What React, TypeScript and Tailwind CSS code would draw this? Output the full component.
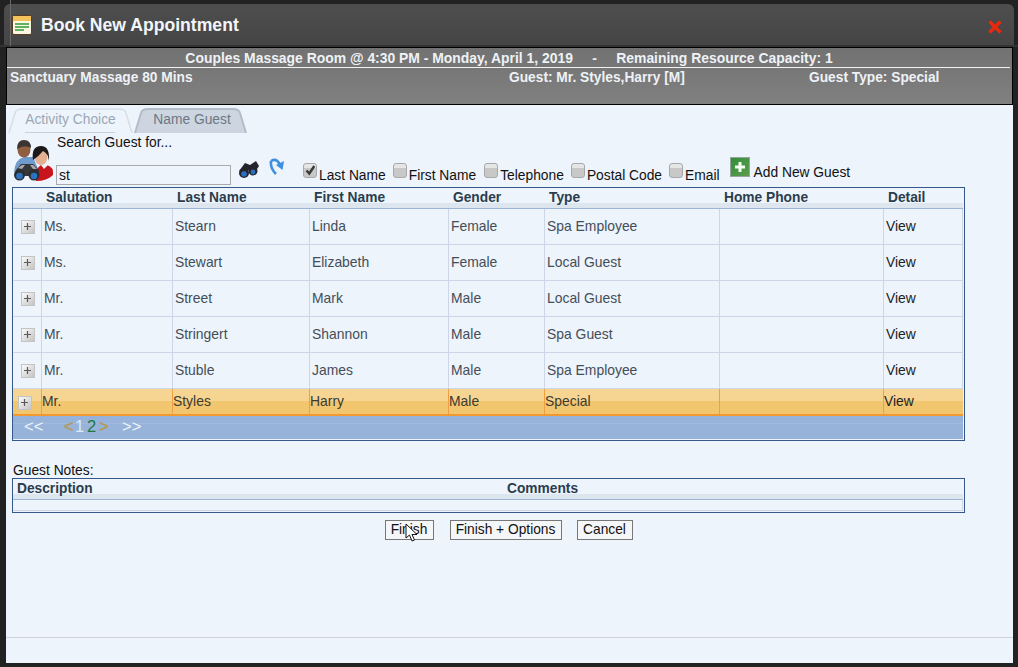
import React from "react";

const rows = [
  ["Ms.", "Stearn", "Linda", "Female", "Spa Employee"],
  ["Ms.", "Stewart", "Elizabeth", "Female", "Local Guest"],
  ["Mr.", "Street", "Mark", "Male", "Local Guest"],
  ["Mr.", "Stringert", "Shannon", "Male", "Spa Guest"],
  ["Mr.", "Stuble", "James", "Male", "Spa Employee"],
];
const headW = [28, 131, 137, 139, 96, 175, 164, 80];
const heads = ["", "Salutation", "Last Name", "First Name", "Gender", "Type", "Home Phone", "Detail"];

function Plus() {
  return (
    <span className="flex h-[14px] w-[14px] items-center justify-center border border-[#c4c4c4] bg-gradient-to-br from-[#fbfbfb] to-[#c4c4c4]">
      <svg width="7" height="7" viewBox="0 0 7 7"><path d="M3.5 0v7M0 3.5h7" stroke="#5a5a5a" strokeWidth="1.2" /></svg>
    </span>
  );
}

function Check({ on, label }: { on?: boolean; label: string }) {
  return (
    <span className="flex items-end">
      <span className="mb-[6px] flex h-[15px] w-[14px] items-center justify-center rounded-[3px] border border-[#a8a8a8] bg-[linear-gradient(#e6e6e6_0,#e6e6e6_30%,#c8c8c8_30%,#c8c8c8_100%)]">
        {on && <svg width="11" height="11" viewBox="0 0 11 11"><path d="M1.5 5.5l2.8 3 5-7.5" fill="none" stroke="#3a3a3a" strokeWidth="2.4" /></svg>}
      </span>
      <span className="ml-[2px] text-[13.8px] leading-[16px] text-[#111]">{label}</span>
    </span>
  );
}

function Tab({ w, label, active }: { w: number; label: string; active?: boolean }) {
  return (
    <div className="relative flex h-[25px] items-center justify-center" style={{ width: w }}>
      <svg className="absolute inset-0" width={w} height="25" viewBox={`0 0 ${w} 25`}>
        <path
          d={`M1 25 L7 5 Q8 1 14 1 L${w - 14} 1 Q${w - 8} 1 ${w - 7} 5 L${w - 1} 25`}
          fill={active ? "#edf4fc" : "#cdd5e0"}
          stroke={active ? "#d8dee6" : "#b4bcc8"}
          strokeWidth={active ? 1.5 : 2}
        />
      </svg>
      <span className={`relative text-[13.8px] ${active ? "text-[#9aa7b5]" : "text-[#6b7785] ml-[3px]"}`}>{label}</span>
      {active && <span className="absolute bottom-0 left-[17px] h-[1px] w-[90px] bg-[#c9d0d8]" />}
    </div>
  );
}

function GuestIcon() {
  return (
    <svg width="42" height="44" viewBox="0 0 42 44">
      <path d="M1 33 Q2 20 11 18 L20 18 L26 32 Z" fill="#6f9ccf" />
      <ellipse cx="11" cy="10.5" rx="6.5" ry="8" fill="#8f5f40" />
      <path d="M4 10 Q4 1 11 1 Q18 1 18 9 Q12 5 4 10Z" fill="#3a3533" />
      <path d="M23 42 Q22 29 28 26 L34 26 Q41 28 40 36 Q34 42 23 42Z" fill="#c9141d" />
      <path d="M28 26 L31 30 L35 26 Z" fill="#f3f3f3" />
      <ellipse cx="28" cy="18" rx="6.5" ry="8" fill="#e3b091" />
      <path d="M20 21 Q18 7 28 7 Q37 7 36 22 Q35 14 30 12 Q26 17 20 21Z" fill="#1b1919" />
      <path d="M3 31 L8 25 L20 25 L26 31 L26 37 L3 37 Z" fill="#34363a" />
      <path d="M5 29 L9 26 L12 26 L9 30Z" fill="#a8acb0" />
      <path d="M17 26 L20 26 L24 30 L20 30Z" fill="#a8acb0" />
      <circle cx="6.5" cy="36" r="5.5" fill="#2b2d30" />
      <circle cx="6.5" cy="37" r="3.3" fill="#2c73c4" />
      <circle cx="21" cy="36" r="5.5" fill="#2b2d30" />
      <circle cx="21" cy="37" r="3.3" fill="#2c73c4" />
    </svg>
  );
}

export default function App() {
  const font = { fontFamily: '"Liberation Sans", Arial, sans-serif' };
  return (
    <div className="relative flex h-[667px] w-[1018px] flex-col overflow-hidden bg-[#222222]" style={font}>
      {/* title */}
      <div className="mx-[4px] mt-[4px] flex h-[41px] shrink-0 items-center rounded-t-[6px] bg-gradient-to-b from-[#4e4e4e] to-[#454545] pl-[8px] pr-[12px]">
        <svg width="20" height="20" viewBox="0 0 20 20">
          <rect x="0.5" y="0.5" width="19" height="19" rx="1.5" fill="#fbf6e4" stroke="#5a3d20" />
          <rect x="1" y="1" width="18" height="5" fill="#f3c25a" />
          <path d="M3 9h14M3 12h14M3 15h9" stroke="#2e9a35" strokeWidth="1.6" />
        </svg>
        <span className="ml-[9px] text-[17.6px] font-bold leading-[22px] text-[#f2f6fb]">Book New Appointment</span>
        <svg className="ml-auto mt-[5px]" width="14" height="14" viewBox="0 0 14 14">
          <path d="M1.5 1.5l11 11M12.5 1.5l-11 11" stroke="#e8290c" strokeWidth="3.2" />
        </svg>
      </div>
      <div className="h-[2px] shrink-0 bg-[#333]" />
      {/* panel */}
      <div className="ml-[6px] mr-[5px] h-[58px] shrink-0 border border-black bg-gradient-to-b from-[#727272] to-[#808080] text-[13.75px] font-bold text-[#eef2f6]">
        <div className="mr-[2px] flex h-[20px] items-center justify-center border-b border-[#f2f2f2] pl-[1px] text-[13.92px] leading-[16px] whitespace-pre">
          Couples Massage Room @ 4:30 PM - Monday, April 1, 2019{"     -     "}Remaining Resource Capacity: 1
        </div>
        <div className="relative flex pt-[2px] leading-[16px]">
          <span className="ml-[3px] w-[499px]">Sanctuary Massage 80 Mins</span>
          <span className="w-[300px]">Guest: Mr. Styles,Harry [M]</span>
          <span>Guest Type: Special</span>
        </div>
      </div>
      {/* body */}
      <div className="ml-[6px] mr-[5px] flex h-[558px] shrink-0 flex-col bg-[#edf4fc]">
        <div className="ml-[2px] mt-[3px] flex h-[25px] shrink-0 gap-[1px]">
          <Tab w={125} label="Activity Choice" active />
          <Tab w={113} label="Name Guest" />
        </div>
        {/* search */}
        <div className="ml-[7px] flex h-[54px] shrink-0">
          <div className="mt-[6px]"><GuestIcon /></div>
          <div className="ml-[1px] flex flex-col">
            <span className="ml-[1px] h-[18px] text-[13.8px] leading-[20px] text-[#111]">Search Guest for...</span>
            <div className="mt-[14px] h-[20px] w-[175px] border border-[#aaa] bg-[#edf4fc] pl-[2px] text-[14px] leading-[18px] text-[#111]">st</div>
          </div>
          <div className="ml-[7px] mt-[27px]">
            <svg width="22" height="19" viewBox="0 0 22 19">
              <path d="M1 11 L7 3 L12 5 L18 1 L21 6 L17 12 L9 10 Z" fill="#24242c" />
              <circle cx="6" cy="13" r="5" fill="#24242c" />
              <circle cx="6" cy="14" r="2.8" fill="#2a6fc0" />
              <circle cx="15" cy="11" r="4.5" fill="#24242c" />
              <circle cx="15" cy="12" r="2.4" fill="#2a6fc0" />
            </svg>
          </div>
          <div className="ml-[9px] mt-[25px]">
            <svg width="16" height="18" viewBox="0 0 16 18">
              <path d="M2 3 Q7 0 10 5 L11 8" fill="none" stroke="#3f8ee0" strokeWidth="2.6" />
              <path d="M7 7 L15 3 L13.5 12 Z" fill="#3f8ee0" />
              <path d="M2 3 Q1 10 7 16" fill="none" stroke="#3f8ee0" strokeWidth="2.6" />
            </svg>
          </div>
          <div className="ml-[18px] flex h-[51px] items-end">
            <Check on label="Last Name" />
            <span className="w-[7px]" />
            <Check label="First Name" />
            <span className="w-[8px]" />
            <Check label="Telephone" />
            <span className="w-[7px]" />
            <Check label="Postal Code" />
            <span className="w-[7px]" />
            <Check label="Email" />
          </div>
          <div className="ml-[10px] mt-[24px] flex h-[20px] items-start">
            <span className="flex h-[20px] w-[20px] items-center justify-center border border-[#9aa59a] bg-gradient-to-br from-[#2f8f3b] to-[#5d9c4f]">
              <svg width="12" height="12" viewBox="0 0 12 12"><path d="M6 1v10M1 6h10" stroke="#f4fff4" strokeWidth="3" /></svg>
            </span>
            <span className="ml-[4px] mt-[8px] text-[13.8px] leading-[16px] text-[#111]">Add New Guest</span>
          </div>
        </div>
        {/* grid */}
        <div className="ml-[6px] h-[254px] w-[953px] shrink-0 border border-[#34588a]">
          <div className="flex h-[15px] text-[13.75px] font-bold leading-[20px] text-[#2b3d4d]">
            {heads.map((h, i) => (
              <span key={i} className="whitespace-nowrap pl-[5px]" style={{ width: headW[i] }}>{h}</span>
            ))}
          </div>
          <div className="mr-[1px] h-[6px] bg-[#dde6ef] border-b border-[#9db6d6]" />
          {rows.map((r, i) => (
            <div key={i} className="mr-[1px] flex h-[36px] border-b border-[#cdd6e6] text-[13.9px] text-[#444e58]">
              <span className="flex w-[29px] items-center justify-center border-r border-[#cdd6e6] pl-[1px]"><Plus /></span>
              <span className="flex w-[131px] items-center border-r border-[#cdd6e6] pl-[2px]">{r[0]}</span>
              <span className="flex w-[137px] items-center border-r border-[#cdd6e6] pl-[2px]">{r[1]}</span>
              <span className="flex w-[139px] items-center border-r border-[#cdd6e6] pl-[2px]">{r[2]}</span>
              <span className="flex w-[96px] items-center border-r border-[#cdd6e6] pl-[2px]">{r[3]}</span>
              <span className="flex w-[175px] items-center border-r border-[#cdd6e6] pl-[2px]">{r[4]}</span>
              <span className="w-[164px] border-r border-[#cdd6e6]" />
              <span className="flex flex-1 items-center border-r border-[#cdd6e6] pl-[2px] text-[#222]">View</span>
            </div>
          ))}
          <div className="mr-[1px] flex h-[27px] border-b-2 border-[#f2982f] bg-[linear-gradient(#f6d593_0,#f6d593_12px,#f2c56f_12px,#f2c56f_100%)] text-[13.9px] text-[#3d3a30]">
            <span className="flex w-[29px] items-center justify-center border-r border-[#f0a040] pr-[5px] pt-[2px]"><Plus /></span>
            <span className="flex w-[131px] items-center border-r border-[#f0a040]">{"Mr."}</span>
            <span className="flex w-[137px] items-center border-r border-[#f0a040]">Styles</span>
            <span className="flex w-[139px] items-center border-r border-[#f0a040]">Harry</span>
            <span className="flex w-[96px] items-center border-r border-[#f0a040]">Male</span>
            <span className="flex w-[175px] items-center border-r border-[#f0a040]">Special</span>
            <span className="w-[164px] border-r border-[#f0a040]" />
            <span className="flex flex-1 items-center text-[#222]">View</span>
          </div>
          <div className="mr-[1px] flex h-[23px] items-center bg-[linear-gradient(#97b3d9_0,#97b3d9_7px,#a0b9dc_7px,#a0b9dc_8px,#97b3d9_8px)] pb-[3px] pl-[11px] text-[16.5px] leading-[20px]">
            <span className="w-[40px] text-[#eef5fc]">&lt;&lt;</span>
            <span className="w-[11px] font-bold text-[#b59a5e]">&lt;</span>
            <span className="w-[12px] text-[#d5eefc]">1</span>
            <span className="w-[12px] text-[#1e7a3c]">2</span>
            <span className="w-[23px] font-bold text-[#b59a5e]">&gt;</span>
            <span className="text-[#eef5fc]">&gt;&gt;</span>
          </div>
        </div>
        {/* notes */}
        <div className="ml-[7px] mt-[21px] h-[16px] shrink-0 text-[13.8px] leading-[18px] text-[#111]">Guest Notes:</div>
        <div className="ml-[6px] h-[35px] w-[953px] shrink-0 border border-[#34588a]">
          <div className="flex h-[15px] text-[13.75px] font-bold leading-[20px] text-[#2b3d4d]">
            <span className="w-[494px] pl-[4px]">Description</span>
            <span>Comments</span>
          </div>
          <div className="mr-[1px] h-[6px] border-b border-[#9db6d6] bg-[#dde6ef]" />
          <div className="mr-[1px] h-[11px] border-b border-r border-[#cdd6e6]" />
        </div>
        {/* buttons */}
        <div className="mt-[7px] flex h-[20px] shrink-0 justify-center gap-[15px] pr-[2px] text-[13.75px] leading-[16px] text-[#111]">
          <button className="mr-[1px] w-[49px] border border-[#777] bg-[#f5f6f7] pb-[1px]">Finish</button>
          <button className="w-[112px] border border-[#777] bg-[#f5f6f7] pb-[1px]">Finish + Options</button>
          <button className="w-[56px] border border-[#777] bg-[#f5f6f7] pb-[1px]">Cancel</button>
        </div>
        <div className="mt-[97px] h-[1px] shrink-0 bg-[#cdd2de]" />
      </div>
      {/* mouse cursor over button */}
      <svg className="absolute left-[405px] top-[523px]" width="14" height="20" viewBox="0 0 14 20">
        <path d="M1 1 L1 15 L4.5 12 L7 18 L9.5 17 L7 11.5 L12 11.5 Z" fill="#fff" stroke="#111" strokeWidth="1" />
      </svg>
      {/* capture artefact line on the window frame */}
      <span className="absolute left-[10px] top-0 h-[46px] w-[1px] bg-[#6a6a6a]" />
    </div>
  );
}
